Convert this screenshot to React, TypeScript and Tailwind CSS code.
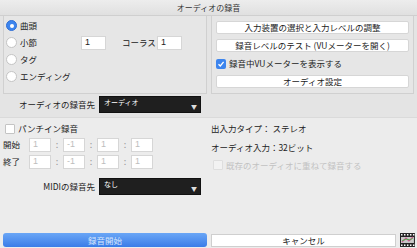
import React from "react";

const font = { fontFamily: '"Noto Sans CJK JP", "Noto Sans", sans-serif' };

const Radio = ({checked, label}: {checked?: boolean, label: string}) => (
    <div className="flex items-center h-[17px] gap-[3px] whitespace-nowrap">
        {checked ? (
            <span className="w-[11px] h-[11px] rounded-full bg-[#3d85ee] border border-[#2f6fd6] flex items-center justify-center">
                <span className="w-[4px] h-[4px] rounded-full bg-white"/>
            </span>
        ) : (
            <span className="w-[11px] h-[11px] rounded-full bg-white border border-[#c4c4c4]"/>
        )}
        <span className="text-[8.5px] text-[#222]">{label}</span>
    </div>
);

const SmallInput = ({value, w, dim}: {value: string, w: string, dim?: boolean}) => (
    <div className={`${w} h-[14px] bg-white border border-[#d6d6d6] flex items-center px-[3px] text-[9px] ${dim ? "text-[#bdbdbd]" : "text-[#222]"}`}
         style={{fontFamily: '"Liberation Sans", sans-serif'}}>
        {value}
    </div>
);

const Btn = ({label}: {label: string}) => (
    <div className="h-[13px] bg-white rounded-[2px] border border-[#d6d6d6] flex items-center justify-center text-[8.5px] text-[#222] leading-none whitespace-nowrap">
        {label}
    </div>
);

const DarkSelect = ({value}: {value: string}) => (
    <div className="relative w-[102px] h-[17px] bg-[#1f1f1f] border border-[#111] text-[7px] text-white pl-[4px] pt-[2px] leading-none">
        {value}
        <span className="absolute right-[3px] bottom-[2px] text-[6px] text-[#ddd]">▼</span>
    </div>
);

const TimeRow = ({label}: {label: string}) => (
    <div className="flex items-center h-[17px]">
        <span className="w-[26px] text-[8.5px] text-[#222]">{label}</span>
        <SmallInput value="1" w="w-[22px]" dim/>
        <span className="w-[12px] text-center text-[9px] text-[#999]">:</span>
        <SmallInput value="-1" w="w-[22px]" dim/>
        <span className="w-[12px] text-center text-[9px] text-[#999]">:</span>
        <SmallInput value="1" w="w-[22px]" dim/>
        <span className="w-[12px] text-center text-[9px] text-[#999]">:</span>
        <SmallInput value="1" w="w-[22px]" dim/>
    </div>
);

export default function App() {
    return (
        <div className="w-[417px] h-[248px] bg-[#ececec] flex flex-col overflow-hidden" style={font}>
            <div className="h-[16px] bg-gradient-to-b from-[#ededed] to-[#e0e0e0] border-b border-[#cfcfcf] flex items-center justify-center text-[8px] text-[#333]">
                オーディオの録音
            </div>
            <div className="bg-[#e4e4e4] border-b border-[#dadada] h-[102px] flex flex-col">
                <div className="flex gap-[4px] pl-[3px] pr-[3px]">
                    <div className="w-[204px] h-[78px] border border-[#d0d0d0] border-t-0 bg-[#e6e6e6] pl-[2px] pt-[1px]">
                        <Radio checked label="曲頭"/>
                        <div className="flex items-center">
                            <div className="w-[75px]"><Radio label="小節"/></div>
                            <SmallInput value="1" w="w-[25px]"/>
                            <span className="ml-[16px] w-[35px] whitespace-nowrap text-[8.5px] text-[#222]">コーラス</span>
                            <SmallInput value="1" w="w-[25px]"/>
                        </div>
                        <Radio label="タグ"/>
                        <Radio label="エンディング"/>
                    </div>
                    <div className="w-[203px] h-[78px] border border-[#d0d0d0] border-t-0 bg-[#e6e6e6] px-[4px] pt-[5px] flex flex-col gap-[5px]">
                        <Btn label="入力装置の選択と入力レベルの調整"/>
                        <Btn label="録音レベルのテスト (VUメーターを開く)"/>
                        <div className="flex items-center h-[13px] gap-[3px]">
                            <span className="w-[10px] h-[10px] rounded-[2px] bg-[#3d85ee] flex items-center justify-center">
                                <svg width="8" height="8" viewBox="0 0 8 8"><path d="M1.5 4.2 L3.3 6 L6.6 1.8" stroke="white" strokeWidth="1.3" fill="none"/></svg>
                            </span>
                            <span className="text-[8.5px] text-[#222]">録音中VUメーターを表示する</span>
                        </div>
                        <Btn label="オーディオ設定"/>
                    </div>
                </div>
                <div className="flex items-center mt-[2px] pl-[3px]">
                    <span className="w-[96px] text-right pr-[4px] text-[8.5px] text-[#222]">オーディオの録音先</span>
                    <DarkSelect value="オーディオ"/>
                </div>
            </div>
            <div className="flex flex-1">
                <div className="w-[208px] pl-[3px] pt-[3px]">
                    <div className="flex items-center h-[15px] gap-[3px] pl-[2px]">
                        <span className="w-[10px] h-[10px] bg-white border border-[#c4c4c4] rounded-[1px]"/>
                        <span className="text-[8.5px] text-[#222]">パンチイン録音</span>
                    </div>
                    <TimeRow label="開始"/>
                    <TimeRow label="終了"/>
                    <div className="flex items-center mt-[8px]">
                        <span className="w-[96px] text-right pr-[4px] text-[8.5px] text-[#222]">MIDIの録音先</span>
                        <DarkSelect value="なし"/>
                    </div>
                </div>
                <div className="flex-1 pl-[3px] pt-[3px]">
                    <div className="h-[15px] flex items-center text-[8.5px] text-[#222]">出入力タイプ： ステレオ</div>
                    <div className="h-[18px] mt-[2px] flex items-center text-[8.5px] text-[#222]">オーディオ入力：32ビット</div>
                    <div className="flex items-center h-[16px] gap-[3px] mt-[1px] pl-[2px]">
                        <span className="w-[10px] h-[10px] bg-[#f2f2f2] border border-[#dedede] rounded-[1px]"/>
                        <span className="text-[8.5px] text-[#c2c2c2]">既存のオーディオに重ねて録音する</span>
                    </div>
                </div>
            </div>
            <div className="flex items-center gap-[4px] pl-[3px] pr-[2px] pb-[1px]">
                <div className="w-[205px] h-[14px] rounded-[3px] bg-gradient-to-b from-[#6aa6f6] to-[#3a7ce8] flex items-center justify-center text-[8.5px] text-[#d6e6fc]">
                    録音開始
                </div>
                <div className="w-[186px] h-[13px] bg-white border border-[#cfcfcf] flex items-center justify-center text-[8.5px] text-[#222]">
                    キャンセル
                </div>
                <svg width="15" height="14" viewBox="0 0 15 14">
                    <rect x="0" y="0" width="15" height="14" fill="#222"/>
                    {[1, 4, 7, 10, 13].map(x => <rect key={"t" + x} x={x} y="1" width="1.5" height="1.5" fill="#fff"/>)}
                    {[1, 4, 7, 10, 13].map(x => <rect key={"b" + x} x={x} y="11.5" width="1.5" height="1.5" fill="#fff"/>)}
                    <rect x="1" y="4" width="13" height="6" fill="#c9c9c9"/>
                    <path d="M2 9 L6 5 L9 8 L13 4" stroke="#e04a9a" strokeWidth="1.2" fill="none"/>
                    <path d="M2 8 L6 6 L10 7 L13 5" stroke="#48b048" strokeWidth="1" fill="none"/>
                </svg>
            </div>
        </div>
    );
}
